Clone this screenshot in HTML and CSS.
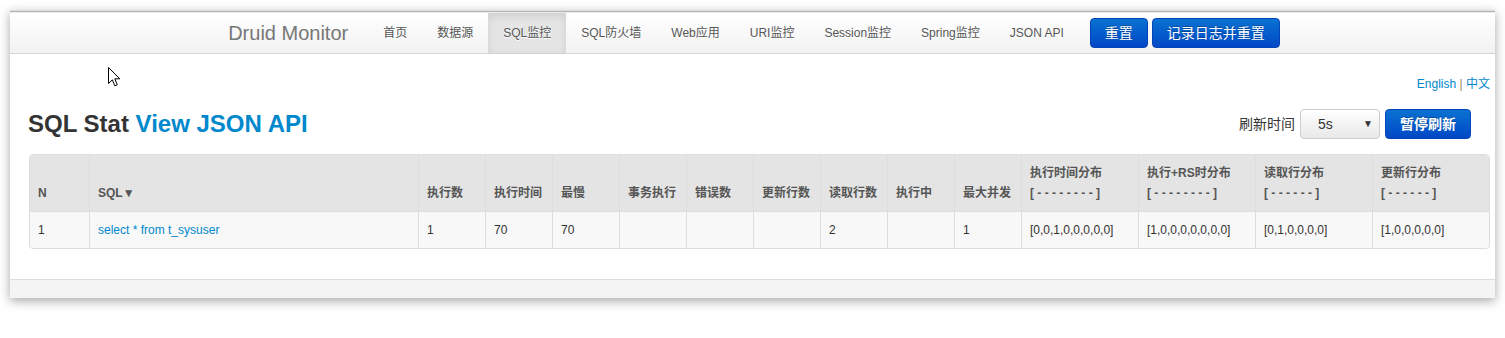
FILE: index.html
```html
<!DOCTYPE html>
<html lang="zh">
<head>
<meta charset="utf-8">
<title>Druid Monitor</title>
<link rel="stylesheet" href="styles.css">
</head>
<body>
<div class="win">
  <div class="topline"></div>
  <div class="navbar">
    <span class="brand">Druid Monitor</span>
    <ul class="nav">
      <li><a href="#">首页</a></li>
      <li><a href="#">数据源</a></li>
      <li class="active"><a href="#">SQL监控</a></li>
      <li><a href="#">SQL防火墙</a></li>
      <li><a href="#">Web应用</a></li>
      <li><a href="#">URI监控</a></li>
      <li><a href="#">Session监控</a></li>
      <li><a href="#">Spring监控</a></li>
      <li><a href="#">JSON API</a></li>
    </ul>
    <div class="nav-btns">
      <button class="btn">重置</button>
      <button class="btn">记录日志并重置</button>
    </div>
  </div>
  <div class="main">
    <svg class="cursor" width="13" height="20" viewBox="0 0 13 20"><path d="M0.5 0.5 L0.5 16.5 L4.3 12.8 L6.8 18.8 L9.3 17.8 L6.8 11.8 L11.8 11.8 Z" fill="#fff" stroke="#000" stroke-width="1" stroke-linejoin="miter"/></svg>
    <div class="lang"><a href="#">English</a> <span class="sep">|</span> <a href="#">中文</a></div>
    <div class="head-row">
      <h3 class="title">SQL Stat <a href="#">View JSON API</a></h3>
      <div class="refresh">
        <span class="refresh-label">刷新时间</span>
        <div class="select"><span>5s</span><span class="arrow">▼</span></div>
        <button class="btn btn-bold">暂停刷新</button>
      </div>
    </div>
    <table class="grid">
      <thead>
        <tr>
          <th class="c-n">N</th>
          <th class="c-sql">SQL▼</th>
          <th class="c-s">执行数</th>
          <th class="c-s">执行时间</th>
          <th class="c-s">最慢</th>
          <th class="c-s">事务执行</th>
          <th class="c-s">错误数</th>
          <th class="c-s">更新行数</th>
          <th class="c-s">读取行数</th>
          <th class="c-s">执行中</th>
          <th class="c-s">最大并发</th>
          <th class="c-w">执行时间分布<br>[ - - - - - - - - ]</th>
          <th class="c-w">执行+RS时分布<br>[ - - - - - - - - ]</th>
          <th class="c-w">读取行分布<br>[ - - - - - - ]</th>
          <th class="c-w">更新行分布<br>[ - - - - - - ]</th>
        </tr>
      </thead>
      <tbody>
        <tr>
          <td>1</td>
          <td><a href="#">select * from t_sysuser</a></td>
          <td>1</td>
          <td>70</td>
          <td>70</td>
          <td></td>
          <td></td>
          <td></td>
          <td>2</td>
          <td></td>
          <td>1</td>
          <td>[0,0,1,0,0,0,0,0]</td>
          <td>[1,0,0,0,0,0,0,0]</td>
          <td>[0,1,0,0,0,0]</td>
          <td>[1,0,0,0,0,0]</td>
        </tr>
      </tbody>
    </table>
  </div>
  <div class="footer"></div>
</div>
</body>
</html>
```

FILE: styles.css
```css
* { box-sizing: border-box; }
html, body {
  margin: 0;
  padding: 0;
  background: #fff;
}
body {
  font-family: "Liberation Sans", Arial, "Noto Sans CJK SC", sans-serif;
  font-size: 14px;
  line-height: 20px;
  color: #333;
  width: 1505px;
  height: 338px;
  overflow: hidden;
}
a { color: #0088cc; text-decoration: none; }

.win {
  margin: 10px 0 0 10px;
  width: 1485px;
  height: 288px;
  background: #fff;
  border-top: 1px solid #dedede;
  box-shadow: 0 3px 10px rgba(0, 0, 0, 0.35);
  display: flex;
  flex-direction: column;
}
.topline {
  height: 2px;
  background: linear-gradient(to bottom, #b4b4b4 0, #b4b4b4 1px, #ececec 1px);
}

.navbar {
  height: 41px;
  flex: none;
  border-bottom: 1px solid #d4d4d4;
  background: linear-gradient(to bottom, #ffffff, #f2f2f2);
  display: flex;
  align-items: center;
  justify-content: center;
  padding-right: 17px;
}
.brand {
  font-size: 20px;
  color: #777;
  padding: 0 20px;
  line-height: 40px;
}
.nav {
  list-style: none;
  margin: 0;
  padding: 0;
  display: flex;
  height: 40px;
}
.nav li a {
  display: block;
  padding: 0 15px;
  line-height: 40px;
  font-size: 12px;
  color: #555;
  text-shadow: 0 1px 0 #fff;
}
.nav li.active a {
  background: #e5e5e5;
  box-shadow: inset 0 3px 8px rgba(0, 0, 0, 0.1);
}
.nav-btns {
  display: flex;
  gap: 4px;
  margin-left: 11px;
}
.btn {
  font-family: "Liberation Sans", Arial, "Noto Sans CJK SC", sans-serif;
  font-size: 14px;
  line-height: 20px;
  height: 30px;
  padding: 4px 14px;
  color: #fff;
  border: 1px solid #0044b8;
  border-radius: 4px;
  background: linear-gradient(to bottom, #0a72d2, #0047c6);
  text-shadow: 0 -1px 0 rgba(0, 0, 0, 0.25);
  cursor: pointer;
}
.btn-bold { font-weight: bold; }

.main {
  flex: 1;
  position: relative;
  padding: 0 5px 0 18px;
}
.cursor {
  position: absolute;
  left: 98px;
  top: 13px;
}
.lang {
  margin-top: 20px;
  text-align: right;
  font-size: 12px;
  line-height: 20px;
}
.sep { color: #a08860; }

.head-row {
  margin-top: 10px;
  display: flex;
  align-items: center;
  justify-content: space-between;
  height: 40px;
}
.title {
  margin: 0;
  font-size: 24px;
  font-weight: bold;
  line-height: 40px;
  color: #333;
}
.refresh {
  display: flex;
  align-items: center;
  margin-right: 19px;
}
.refresh-label {
  color: #333;
  margin-right: 5px;
}
.select {
  width: 80px;
  height: 30px;
  border: 1px solid #ccc;
  border-radius: 4px;
  background: linear-gradient(to bottom, #ffffff, #e8e8e8);
  display: flex;
  align-items: center;
  justify-content: space-between;
  padding: 0 6px 0 17px;
  margin-right: 5px;
  font-size: 14px;
  color: #333;
}
.select .arrow {
  font-size: 10px;
  color: #333;
}

.grid {
  margin-top: 10px;
  margin-left: 1px;
  width: 1461px;
  table-layout: fixed;
  border-collapse: separate;
  border-spacing: 0;
  border: 1px solid #dddddd;
  border-radius: 4px;
  font-size: 12px;
  line-height: 20px;
}
.grid th, .grid td {
  padding: 8px;
  text-align: left;
  vertical-align: bottom;
  border-left: 1px solid #dddddd;
}
.grid th:first-child, .grid td:first-child { border-left: none; }
.grid th {
  background: #e4e4e4;
  font-weight: bold;
  color: #555;
}
.grid th:first-child { border-top-left-radius: 4px; }
.grid th:last-child { border-top-right-radius: 4px; }
.grid td {
  background: #f8f8f8;
  border-top: 1px solid #dddddd;
  color: #333;
  vertical-align: top;
}
.grid td:first-child { border-bottom-left-radius: 4px; }
.grid td:last-child { border-bottom-right-radius: 4px; }
.c-n { width: 59px; }
.c-sql { width: 329px; }
.c-s { width: 67px; }
.c-w { width: 117px; }

.footer {
  height: 19px;
  flex: none;
  border-top: 1px solid #dddddd;
  background: #f4f4f4;
}
```
